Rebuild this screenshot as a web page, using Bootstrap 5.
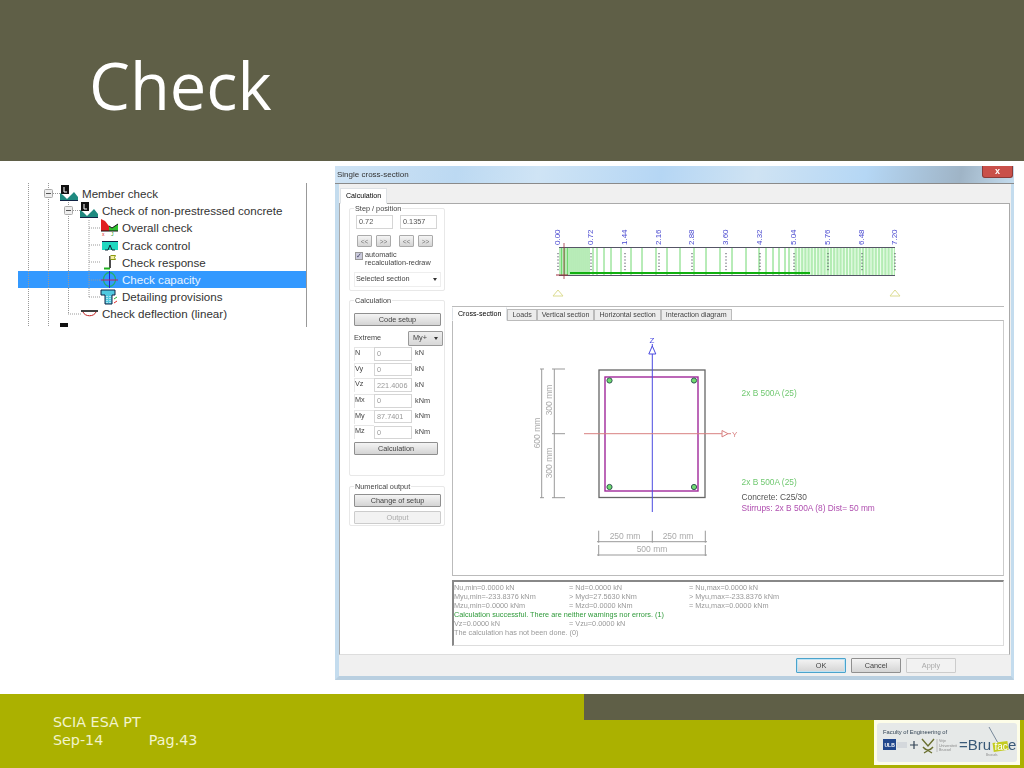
<!DOCTYPE html>
<html lang="en">
<head>
  <meta charset="UTF-8">
  <title>Check</title>
  <meta name="viewport" content="width=device-width, initial-scale=1">

  <!-- Bootstrap CSS -->
  <link href="https://cdn.jsdelivr.net/npm/bootstrap@5.3.7/dist/css/bootstrap.min.css" rel="stylesheet">

  <style>
    body { background: #fff; overflow: hidden; }
    .slide { width: 1024px; height: 768px; }

    /* header */
    .slide-head { height: 161px; background: #5f5f47; padding: 10px 0 0 89px; }
    .slide-title { font: 400 65px/1 "Open Sans", sans-serif; color: #fff; margin: 0; }

    /* main */
    .slide-main { height: 533px; }

    /* tree */
    .tree-box { width: 289px; height: 144px; margin: 22px 0 0 18px; border-right: 1px solid #999; overflow: hidden;
      font: 11.6px "Liberation Sans", sans-serif; color: #333; padding-top: 2px; }
    .tree-row { height: 17.2px; }
    .lvl-0 { padding-left: 42px; }
    .lvl-1 { padding-left: 62px; }
    .lvl-2 { padding-left: 82px; }
    .tree-row svg { width: 19px; height: 17px; margin-right: 3px; flex: none; }
    .tree-sel { background: #3399ff; color: #e8f4ff; }
    .tree-guides { position: absolute; left: 0; top: 0; pointer-events: none; }

    /* dialog */
    .dlg { width: 679px; height: 514px; margin: 5px 0 0 28px; background: #f0f0f0; filter: blur(.4px);
      font: 7.3px/1.2 "Liberation Sans", sans-serif; color: #444;
      border-left: 4px solid #c4dcee; border-right: 3px solid #c4dcee; border-bottom: 4px solid #b9cfe0; }
    .dlg-title { height: 18px; margin: 0 -3px 0 -4px; padding-left: 2px; font-size: 8px; color: #333; border-bottom: 1px solid #8a8a8a;
      background: linear-gradient(100deg, #cfe3f4 0%, #bcd9f2 18%, #cfe4f5 30%, #b5d6f4 48%, #cfe3f3 62%, #b5d7f5 78%, #9fb4c6 92%, #c4dcee 100%); }
    .dlg-close { width: 31px; height: 12px; margin-right: 1px; align-self: flex-start; background: #c9504a; color: #fff; font-size: 9px; font-weight: 700;
      border-radius: 0 0 3px 3px; border: 1px solid #8c3a38; border-top: 0; }
    .dlg-tabs { height: 19px; padding-left: 1px; border-bottom: 0; align-items: flex-end; }
    .dlg-tabs .nav-link, .sub-tabs .nav-link { font-size: 7.1px; padding: 0 4px; color: #444; border-radius: 0; border: 1px solid #bbb; background: #ececec; }
    .dlg-tabs .nav-link { height: 16px; line-height: 14px; width: 47px; background: #fff; border-bottom-color: #fff; margin-bottom: -1px; position: relative; padding: 0 5px; }
    .dlg-panel { height: 452px; background: #fff; border: 1px solid #aaa; border-bottom-color: #ddd; margin-right: 1px; }
    .dlg-foot { height: 21px; padding-left: 457px; gap: 5px; }

    /* left column */
    .side-col { width: 96px; margin: 4px 0 0 9px; flex: none; }
    .grp { position: relative; border: 1px solid #e8e8e8; border-radius: 2px; padding: 0 3px 0 4px; }
    .grp-title { position: absolute; left: 4px; top: -5px; background: #fff; padding: 0 1px; line-height: 9px; }
    .grp-a { height: 83px; padding-top: 6px; }
    .grp-b { height: 176px; margin-top: 9px; padding-top: 12px; }
    .grp-c { height: 40px; margin-top: 10px; padding-top: 7px; }
    .xp-input.form-control { height: 13.5px; min-height: 0; padding: 0 2px; font-size: 7.3px; border: 1px solid #d5d5d5; border-radius: 0; color: #666; line-height: 12px; }
    .step-row { padding-left: 2px; }
    .step-row .xp-input.form-control { width: 37px; flex: none; color: #555; }
    .step-btns { margin-top: 6px; padding-left: 3px; }
    .xp-btn.btn { --bs-btn-font-size: 7.3px; height: 13px; padding: 0; line-height: 11px; color: #444; border: 1px solid #8f8f8f; border-radius: 1px;
      background: linear-gradient(#f4f4f4, #d4d4d4); display: block; width: 100%; }
    .xp-btn.mini { width: 15px; height: 12px; font-size: 6.5px; color: #777; border-color: #aaa; flex: none; }
    .xp-btn.off { color: #aaa; border-color: #ccc; background: #f2f2f2; opacity: 1; }
    .xp-btn.ok { border-color: #4aa3cc; box-shadow: inset 0 0 0 1px #bfe3f4; }
    .dlg-foot .xp-btn { width: 50px; height: 15px; }
    .calc-btn.xp-btn { width: 84px; margin-top: 2px; }
    .auto-row { margin-top: 4px; gap: 2px; padding-left: 1px; }
    .xp-check { width: 8px; height: 8px; margin-top: 1px; background: #ccd; border: 1px solid #999; color: #446; font-size: 7px; line-height: 6px; flex: none; }
    .xp-select { height: 15px; border: 1px solid #eee; padding: 0 3px 0 1px; margin-top: 4px; }
    .caret-dn { width: 0; height: 0; border: 2.5px solid transparent; border-top: 3px solid #333; border-bottom: 0; }
    .extreme-row { height: 15px; margin-top: 5px; }
    .my-box { width: 35px; height: 15px; border: 1px solid #999; border-radius: 1px; background: linear-gradient(#eee, #d8d8d8); padding: 0 4px; margin-right: -2px; }
    .force-row { height: 15.7px; }
    .force-lbl { width: 20px; height: 14px; flex: none; border-top: 1px solid #e6e6e6; border-left: 1px solid #e6e6e6; margin-right: 0; line-height: 10px; }
    .force-row .xp-input.form-control { width: 38px; flex: none; color: #999; }
    .force-unit { margin-left: 3px; }

    /* right column */
    .draw-col { width: 552px; margin-left: 7px; }
    .beam-svg { display: block; width: 552px; height: 102px; }
    .sub-tabs { height: 14px; border-top: 1px solid #bbb; border-bottom: 0; align-items: flex-end; }
    .sub-tabs .nav-link { height: 12px; line-height: 10px; white-space: nowrap; }
    .sub-tabs .nav-link.active { height: 14px; line-height: 12px; padding: 0 5px; background: #fff; border-bottom-color: #fff; border-top-color: #fff; margin-bottom: -1px; position: relative; }
    .sect-box { height: 256px; border: 1px solid #bbb; border-right-color: #ccc; }
    .sect-svg { display: block; width: 550px; height: 254px; }
    .out-box { height: 66px; margin-top: 4px; border-style: solid; border-width: 2px 1px 1px 2px; border-color: #888 #ddd #ddd #888; padding: .5px 0 0; color: #999; line-height: 9.05px; }
    .out-grid { display: grid; grid-template-columns: 115px 120px 1fr; }
    .out-good { color: #2f9a3a; }
    .draw-label { font-family: "Liberation Sans", sans-serif; }

    /* footer */
    .slide-foot { height: 74px; background: #abb100; color: #f2f4cc; font: 14.3px/18px "DejaVu Sans", sans-serif; }
    .foot-text { width: 584px; padding: 19px 0 0 53px; }
    .foot-page { margin-left: 41px; }
    .foot-bar { height: 26px; background: #5f5f47; }
    .foot-logo { display: block; width: 146px; height: 45px; margin: 0 4px 0 auto; filter: blur(.4px); }
  </style>
</head>
<body>

<div class="slide d-flex flex-column">

  <!-- HEADER -->
  <header class="slide-head d-flex align-items-center">
    <h1 class="slide-title">Check</h1>
  </header>

  <!-- MAIN -->
  <div class="slide-main d-flex">

    <!-- tree screenshot -->
    <div class="tree-box position-relative">
      <div class="tree-row lvl-0 d-flex align-items-center">
        <svg viewBox="0 0 19 17"><rect x="1" y="0" width="8" height="9" fill="#111"/><path d="M4 2v5h3" stroke="#fff" fill="none"/><path d="M0 15V8l3 2 4 4 4-4 3-3 4 5 0 3z" fill="#1f8a80"/><path d="M0 15.5h18" stroke="#124"/></svg>
        Member check
      </div>
      <div class="tree-row lvl-1 d-flex align-items-center">
        <svg viewBox="0 0 19 17"><rect x="1" y="0" width="8" height="9" fill="#111"/><path d="M4 2v5h3" stroke="#fff" fill="none"/><path d="M0 15V8l3 2 4 4 4-4 3-3 4 5 0 3z" fill="#1f8a80"/><path d="M0 15.5h18" stroke="#124"/></svg>
        Check of non-prestressed concrete
      </div>
      <div class="tree-row lvl-2 d-flex align-items-center">
        <svg viewBox="0 0 19 17"><path d="M1 0l4 2 4 5v5H1z" fill="#e02020"/><path d="M9 12V7l3 2 6-4v7z" fill="#30c030"/><path d="M1 12h17" stroke="#111"/><path d="M9 7l3 2 6-4" stroke="#111" fill="none"/><text x="2" y="17" font-size="5" fill="#e02020">x</text><text x="11" y="17" font-size="5" fill="#20a020">J</text></svg>
        Overall check
      </div>
      <div class="tree-row lvl-2 d-flex align-items-center">
        <svg viewBox="0 0 19 17"><rect x="2" y="4" width="16" height="9" fill="#20d8c0"/><path d="M2 4.5h16" stroke="#124"/><path d="M5 13h3l2-5 2 5h3" stroke="#123" fill="none"/></svg>
        Crack control
      </div>
      <div class="tree-row lvl-2 d-flex align-items-center">
        <svg viewBox="0 0 19 17"><path d="M10 2v12" stroke="#111" stroke-width="1.5"/><path d="M10.500 1.500h5l-1 2 1 2h-5" fill="#f4f0a0" stroke="#8a9a10"/><path d="M4 14.500h6" stroke="#20b020" stroke-width="2"/></svg>
        Check response
      </div>
      <div class="tree-row lvl-2 tree-sel d-flex align-items-center">
        <svg viewBox="0 0 19 17"><ellipse cx="9.5" cy="8.5" rx="6" ry="7" fill="none" stroke="#20b070" stroke-width="1.3"/><path d="M9.5 0v17" stroke="#2020d0"/><path d="M1 9h17" stroke="#c02060"/></svg>
        Check capacity
      </div>
      <div class="tree-row lvl-2 d-flex align-items-center">
        <svg viewBox="0 0 19 17"><path d="M1 2h14v5h-3v9H5V7H1z" fill="#50c8e0" stroke="#124"/><path d="M7 8v7M10 8v7" stroke="#fff" stroke-dasharray="1 1"/><path d="M14 11l3-2" stroke="#30b030"/><path d="M14 15l3-2" stroke="#e03030"/></svg>
        Detailing provisions
      </div>
      <div class="tree-row lvl-1 d-flex align-items-center">
        <svg viewBox="0 0 19 17"><path d="M1 6h17" stroke="#111" stroke-width="1.6"/><path d="M3 7c2 5 11 5 13 0" stroke="#c02020" fill="none"/></svg>
        Check deflection (linear)
      </div>
      <div class="tree-row lvl-0 d-flex align-items-center">
        <svg viewBox="0 0 19 17"><rect x="0" y="0" width="8" height="9" fill="#111"/></svg>
      </div>

      <!-- dotted tree lines and the collapse boxes -->
      <svg class="tree-guides" width="289" height="144" viewBox="18 183 289 144">
        <g stroke="#999" stroke-dasharray="1 1" fill="none">
          <path d="M28.500 183v144M48.500 183v144M68.500 202v112M89 220v77"/>
          <path d="M53 193.500h7M73 210.500h8M68 314h13M89 228h11M89 245h11M89 262h11M89 280h11M89 297h11"/>
        </g>
        <g fill="#eee" stroke="#aaa">
          <rect x="44.500" y="189.500" width="8" height="8" rx="1"/>
          <rect x="64.500" y="206.500" width="8" height="8" rx="1"/>
        </g>
        <path d="M46 193.500h5M66 210.500h5" stroke="#555"/>
      </svg>
    </div>

    <!-- dialog screenshot -->
    <div class="dlg d-flex flex-column">
      <div class="dlg-title d-flex justify-content-between align-items-center">
        <span>Single cross-section</span>
        <span class="dlg-close d-flex align-items-center justify-content-center">x</span>
      </div>

      <ul class="nav nav-tabs dlg-tabs">
        <li class="nav-item"><a class="nav-link active" href="#">Calculation</a></li>
      </ul>

      <div class="dlg-panel d-flex">
        <!-- left controls -->
        <div class="side-col">
          <div class="grp grp-a">
            <span class="grp-title">Step / position</span>
            <div class="step-row d-flex justify-content-between pe-1">
              <input class="form-control xp-input" value="0.72">
              <input class="form-control xp-input" value="0.1357">
            </div>
            <div class="step-btns d-flex">
              <button class="btn xp-btn mini">&lt;&lt;</button>
              <button class="btn xp-btn mini ms-1">&gt;&gt;</button>
              <button class="btn xp-btn mini ms-2">&lt;&lt;</button>
              <button class="btn xp-btn mini ms-1">&gt;&gt;</button>
            </div>
            <div class="auto-row d-flex">
              <span class="xp-check text-center">&#10003;</span>
              <span class="text-nowrap">automatic<br>recalculation-redraw</span>
            </div>
            <div class="xp-select d-flex justify-content-between align-items-center">
              <span>Selected section</span><span class="caret-dn"></span>
            </div>
          </div>

          <div class="grp grp-b">
            <span class="grp-title">Calculation</span>
            <button class="btn xp-btn">Code setup</button>
            <div class="extreme-row d-flex justify-content-between align-items-center">
              <span>Extreme</span>
              <span class="my-box d-flex justify-content-between align-items-center">My+<span class="caret-dn"></span></span>
            </div>
            <div class="force-row d-flex align-items-center"><span class="force-lbl">N</span><input class="form-control xp-input" value="0"><span class="force-unit">kN</span></div>
            <div class="force-row d-flex align-items-center"><span class="force-lbl">Vy</span><input class="form-control xp-input" value="0"><span class="force-unit">kN</span></div>
            <div class="force-row d-flex align-items-center"><span class="force-lbl">Vz</span><input class="form-control xp-input" value="221.4006"><span class="force-unit">kN</span></div>
            <div class="force-row d-flex align-items-center"><span class="force-lbl">Mx</span><input class="form-control xp-input" value="0"><span class="force-unit">kNm</span></div>
            <div class="force-row d-flex align-items-center"><span class="force-lbl">My</span><input class="form-control xp-input" value="87.7401"><span class="force-unit">kNm</span></div>
            <div class="force-row d-flex align-items-center"><span class="force-lbl">Mz</span><input class="form-control xp-input" value="0"><span class="force-unit">kNm</span></div>
            <button class="btn xp-btn calc-btn">Calculation</button>
          </div>

          <div class="grp grp-c">
            <span class="grp-title">Numerical output</span>
            <button class="btn xp-btn">Change of setup</button>
            <button class="btn xp-btn off mt-1" disabled>Output</button>
          </div>
        </div>

        <!-- right drawings -->
        <div class="draw-col">
          <svg id="beam" class="beam-svg draw-label" viewBox="452 204 552 102"></svg>

          <ul class="nav nav-tabs sub-tabs">
            <li class="nav-item"><a class="nav-link active" href="#">Cross-section</a></li>
            <li class="nav-item"><a class="nav-link" href="#">Loads</a></li>
            <li class="nav-item"><a class="nav-link" href="#">Vertical section</a></li>
            <li class="nav-item"><a class="nav-link" href="#">Horizontal section</a></li>
            <li class="nav-item"><a class="nav-link" href="#">Interaction diagram</a></li>
          </ul>

          <div class="sect-box">
            <svg class="sect-svg draw-label" viewBox="453 321 550 254">
              <!-- concrete outline and stirrup -->
              <rect x="599" y="370" width="106" height="127.5" fill="none" stroke="#666" stroke-width="1.3"/>
              <rect x="605" y="377" width="93" height="114" fill="none" stroke="#a0289a" stroke-width="1.4"/>
              <g fill="#6fdc6f" stroke="#355">
                <circle cx="609.5" cy="380.5" r="2.6"/><circle cx="694" cy="380.5" r="2.6"/>
                <circle cx="609.5" cy="487" r="2.6"/><circle cx="694" cy="487" r="2.6"/>
              </g>
              <!-- axes -->
              <path d="M652.3 344v168" stroke="#4a4ae0"/>
              <path d="M652.3 346l-3.5 8h7z" fill="#fff" stroke="#4a4ae0"/>
              <text x="649.5" y="343" font-size="8" fill="#4a4ae0">Z</text>
              <path d="M584 433.7h138" stroke="#d88080"/>
              <path d="M722 430.5l6 3.2-6 3.2z" fill="#fff" stroke="#d88080"/>
              <path d="M728 433.7h3" stroke="#d88080"/>
              <text x="732" y="437" font-size="8" fill="#d88080">Y</text>
              <!-- dimensions -->
              <g stroke="#999" fill="none">
                <path d="M541.7 369v129M554.3 369v129"/>
                <path d="M540 369h4M552 369h13M552 433.7h13M540 497.7h4M552 497.7h13"/>
                <path d="M598.7 530.7v12M652.3 530.7v12M705.3 530.7v12M597 541.7h110"/>
                <path d="M598.7 545v11M705.3 545v11M597 555h110"/>
              </g>
              <g fill="#aaa" font-size="8.5" text-anchor="middle">
                <text transform="translate(539.5 433) rotate(-90)">600 mm</text>
                <text transform="translate(552 400) rotate(-90)">300 mm</text>
                <text transform="translate(552 463) rotate(-90)">300 mm</text>
                <text x="625" y="539">250 mm</text>
                <text x="678" y="539">250 mm</text>
                <text x="652" y="552">500 mm</text>
              </g>
              <!-- labels -->
              <g font-size="8.35">
                <text x="741.5" y="396" fill="#70c870">2x B 500A (25)</text>
                <text x="741.5" y="485" fill="#70c870">2x B 500A (25)</text>
                <text x="741.5" y="500" fill="#555">Concrete: C25/30</text>
                <text x="741.5" y="511" fill="#b050b0">Stirrups: 2x B 500A (8) Dist= 50 mm</text>
              </g>
            </svg>
          </div>

          <div class="out-box">
            <div class="out-grid"><span>Nu,min=0.0000 kN</span><span>= Nd=0.0000 kN</span><span>= Nu,max=0.0000 kN</span></div>
            <div class="out-grid"><span>Myu,min=-233.8376 kNm</span><span>&gt; Myd=27.5630 kNm</span><span>&gt; Myu,max=-233.8376 kNm</span></div>
            <div class="out-grid"><span>Mzu,min=0.0000 kNm</span><span>= Mzd=0.0000 kNm</span><span>= Mzu,max=0.0000 kNm</span></div>
            <div class="out-good">Calculation successful. There are neither warnings nor errors. (1)</div>
            <div class="out-grid"><span>Vz=0.0000 kN</span><span>= Vzu=0.0000 kN</span></div>
            <div>The calculation has not been done. (0)</div>
          </div>
        </div>
      </div>

      <div class="dlg-foot d-flex align-items-center">
        <button class="btn xp-btn ok">OK</button>
        <button class="btn xp-btn">Cancel</button>
        <button class="btn xp-btn off" disabled>Apply</button>
      </div>
    </div>
  </div>

  <!-- FOOTER -->
  <footer class="slide-foot d-flex">
    <div class="foot-text">
      SCIA ESA PT<br>
      Sep-14 <span class="foot-page">Pag.43</span>
    </div>
    <div class="flex-grow-1">
      <div class="foot-bar"></div>
      <svg class="foot-logo" viewBox="0 0 146 45" font-family="Liberation Sans">
        <rect width="146" height="45" fill="#fdfde8"/>
        <rect x="3" y="3" width="140" height="39" rx="3" fill="#e6e9e8"/>
        <text x="9" y="14" font-size="5.8" fill="#345">Faculty of Engineering of</text>
        <rect x="9" y="19" width="13" height="11" fill="#20468c"/>
        <text x="10.5" y="26.5" font-size="5" font-weight="700" fill="#fff">ULB</text>
        <rect x="23" y="22" width="10" height="6" fill="#d4d8dc"/>
        <path d="M36 25h8M40 21v8" stroke="#345" stroke-width="1.2"/>
        <path d="M48 19l6 7 6-7M49 27c3 4 7 4 10 0M50 33l8-5M50 28l8 5" stroke="#6a7030" stroke-width="1.4" fill="none"/>
        <path d="M63 19v13" stroke="#bbb"/>
        <text x="65" y="22" font-size="3.6" fill="#888">Vrije</text>
        <text x="65" y="26.5" font-size="3.6" fill="#888">Universiteit</text>
        <text x="65" y="31" font-size="3.6" fill="#888">Brussel</text>
        <text x="85" y="30" font-size="15" fill="#3a5a78">=Bru</text>
        <path d="M115 7l9 16" stroke="#789"/>
        <rect x="119" y="22" width="15" height="9" fill="#c4cc20" transform="rotate(-8 126 26)"/>
        <text x="120.5" y="30" font-size="10" fill="#fff">fac</text>
        <text x="134" y="30" font-size="15" fill="#3a5a78">e</text>
        <text x="112" y="36" font-size="3" fill="#888">Brussels</text>
      </svg>
    </div>
  </footer>
</div>

<!-- Bootstrap JS -->
<script src="https://cdn.jsdelivr.net/npm/bootstrap@5.3.7/dist/js/bootstrap.bundle.min.js"></script>

<!-- Beam drawing -->
<script>
  const beam = document.getElementById("beam");
  const labels = [["0.00",558],["0.72",591],["1.44",625],["2.16",659],["2.88",692],["3.60",726],
                  ["4.32",760],["5.04",794],["5.76",828],["6.48",862],["7.20",895]];
  let stirrups = [560,561.5,563,564.5,566,567.5,569,571,573,575,577,579,581,583,585,587,589,593,597,604,611,621,631,642,656,667,680,694,706,720,732,746,759,766,773,779,785,789];
  for (let x = 791; x < 896; x += 3.2) stirrups.push(x);

  let out = '<rect x="794" y="248" width="101" height="27" fill="#b4ecb4"/>';
  stirrups.forEach(x => {
    out += `<path d="M${x} 248v27" stroke="${x > 790 ? '#f0fff0' : '#60d460'}" stroke-width="${x > 790 ? 1 : .9}"/>`;
  });
  out += '<path d="M559 247.5h336" stroke="#556"/><path d="M559 275.5h336" stroke="#556"/>';
  out += '<path d="M570 273h240" stroke="#10b010" stroke-width="2"/>';
  out += '<path d="M564 243v36" stroke="#a03040" stroke-width=".8"/><path d="M556 275h12" stroke="#a03040"/>';
  labels.forEach(([txt, x]) => {
    out += `<text transform="translate(${x + 1.5} 245) rotate(-90)" font-size="8" fill="#4a4ad0">${txt}</text>`;
    out += `<path d="M${x} 253v18" stroke="#445" stroke-dasharray="1.2 2"/>`;
  });
  [558, 895].forEach(x => {
    out += `<path d="M${x} 290l-5 6h10z" fill="none" stroke="#dcdc90"/>`;
  });
  beam.innerHTML = out;
</script>

</body>
</html>
